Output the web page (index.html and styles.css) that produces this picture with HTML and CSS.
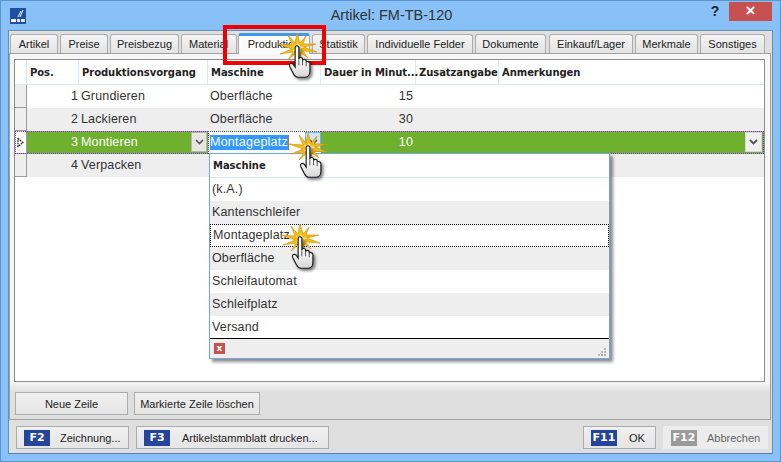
FILE: index.html
```html
<!DOCTYPE html>
<html lang="de">
<head>
<meta charset="utf-8">
<title>Artikel: FM-TB-120</title>
<link rel="stylesheet" href="styles.css">
</head>
<body>
<svg class="defs" width="0" height="0" aria-hidden="true">
  <defs>
    <filter id="soft" x="-30%" y="-30%" width="170%" height="170%">
      <feDropShadow dx="2" dy="2" stdDeviation="1.500" flood-color="#000" flood-opacity=".55"/>
    </filter>
    <linearGradient id="handfill" x1="0" y1="0" x2="0" y2="1">
      <stop offset=".4" stop-color="#fff"/>
      <stop offset="1" stop-color="#d5d5d5"/>
    </linearGradient>
  </defs>
  <symbol id="pointer" viewBox="0 0 50 50">
    <polygon points="22,1 25,11 31,4 28,12 41,12 29,15 42,20 28,19 33,26 26,21 24,31 21,21 13,28 18,20 5,22 17,17 3,12 17,13 13,3 20,11" fill="#f2bd18" stroke="#cf9000" stroke-width=".6"/>
    <polygon points="23,11 25,14 29,15 26,17 25,21 22,19 18,19 20,16 18,13 21,14" fill="#ffefa6"/>
    <g transform="translate(22 14) scale(.92) translate(-22 -14)">
      <path filter="url(#soft)" d="M20 16c0-3 4-3 4 0v12c0-2 4-2 4 0v2c0-2 4-2 4 0v2c0-2 4-1 4 1v9c0 4-3 6-6 6h-7c-3 0-4-2-5-4l-4-8c-1-3 2-4 4-2l2 3z" fill="url(#handfill)" stroke="#1b1b1b" stroke-width="1.200"/>
      <path d="M24 28v7M28 30v5M32 32v4" stroke="#333" stroke-width=".9" fill="none"/>
    </g>
  </symbol>
</svg>

<div class="window">
  <header class="titlebar">
    <svg class="logo" viewBox="0 0 16 16" aria-hidden="true">
      <rect width="16" height="16" fill="#1f4fa3"/>
      <path d="M8 9l3-6M10 9l3-7" stroke="#fff" stroke-width="1" fill="none"/>
      <rect x="1" y="11" width="5" height="3" fill="#fff"/>
      <rect x="7" y="11" width="3" height="3" fill="#dfe8f5"/>
      <rect x="11" y="11" width="4" height="3" fill="#dfe8f5"/>
    </svg>
    <div class="title">Artikel: FM-TB-120</div>
    <div class="help">?</div>
    <div class="close">×</div>
  </header>

  <main class="client">
    <nav class="tabs">
      <div class="tab w-artikel">Artikel</div>
      <div class="tab w-preise">Preise</div>
      <div class="tab w-bezug">Preisbezug</div>
      <div class="tab w-material">Material</div>
      <div class="tab active">Produktion</div>
      <div class="tab w-statistik">Statistik</div>
      <div class="tab w-felder">Individuelle Felder</div>
      <div class="tab w-dok">Dokumente</div>
      <div class="tab w-einkauf">Einkauf/Lager</div>
      <div class="tab w-merk">Merkmale</div>
      <div class="tab w-sonst">Sonstiges</div>
    </nav>

    <section class="pane">
      <div class="grid">
        <div class="row head">
          <div class="hdr c0"></div>
          <div class="hdr c1">Pos.</div>
          <div class="hdr c2">Produktionsvorgang</div>
          <div class="hdr c3">Maschine</div>
          <div class="hdr c4">Dauer in Minut...</div>
          <div class="hdr c5">Zusatzangabe</div>
          <div class="hdr c6">Anmerkungen</div>
        </div>
        <div class="row">
          <div class="sel c0"></div><div class="cell c1 num">1</div><div class="cell c2">Grundieren</div><div class="cell c3">Oberfläche</div><div class="cell c4 num">15</div><div class="cell c5"></div><div class="cell c6"></div>
        </div>
        <div class="row alt">
          <div class="sel c0"></div><div class="cell c1 num">2</div><div class="cell c2">Lackieren</div><div class="cell c3">Oberfläche</div><div class="cell c4 num">30</div><div class="cell c5"></div><div class="cell c6"></div>
        </div>
        <div class="row current">
          <div class="sel c0 marker"><svg width="7" height="9" viewBox="0 0 7 9" aria-hidden="true"><path d="M1 .5L6 4.500L1 8.500Z" fill="#fff" stroke="#000" stroke-width="1.200" stroke-dasharray="1.500 1"/></svg></div>
          <div class="cell c1 num">3</div>
          <div class="cell c2 combo">Montieren<span class="drop"><svg width="9" height="6" viewBox="0 0 9 6" aria-hidden="true"><path d="M1 1l3.500 3.500L8 1" fill="none" stroke="#555" stroke-width="1.600"/></svg></span></div>
          <div class="cell c3 editor"><span class="selected">Montageplatz</span><span class="drop blue"><svg width="9" height="6" viewBox="0 0 9 6" aria-hidden="true"><path d="M1 1l3.500 3.500L8 1" fill="none" stroke="#555" stroke-width="1.600"/></svg></span></div>
          <div class="cell c4 num">10</div>
          <div class="cell c5"></div>
          <div class="cell c6 combo"><span class="drop end"><svg width="9" height="6" viewBox="0 0 9 6" aria-hidden="true"><path d="M1 1l3.500 3.500L8 1" fill="none" stroke="#555" stroke-width="1.800"/></svg></span></div>
        </div>
        <div class="row alt">
          <div class="sel c0"></div><div class="cell c1 num">4</div><div class="cell c2">Verpacken</div><div class="cell c3"></div><div class="cell c4"></div><div class="cell c5"></div><div class="cell c6"></div>
        </div>
      </div>
      <div class="pane-actions">
        <button class="btn new-row">Neue Zeile</button>
        <button class="btn del-row">Markierte Zeile löschen</button>
      </div>
    </section>

    <footer class="actions">
      <button class="btn act draw"><span class="key">F2</span><span class="lbl">Zeichnung...</span></button>
      <button class="btn act print"><span class="key">F3</span><span class="lbl">Artikelstammblatt drucken...</span></button>
      <div class="spacer"></div>
      <button class="btn act ok"><span class="key">F11</span><span class="lbl">OK</span></button>
      <button class="btn act cancel"><span class="key">F12</span><span class="lbl">Abbrechen</span></button>
    </footer>
  </main>

  <div class="popup">
    <div class="pop-head">Maschine</div>
    <div class="pop-item">(k.A.)</div>
    <div class="pop-item alt">Kantenschleifer</div>
    <div class="pop-item focus">Montageplatz</div>
    <div class="pop-item alt">Oberfläche</div>
    <div class="pop-item">Schleifautomat</div>
    <div class="pop-item alt">Schleifplatz</div>
    <div class="pop-item">Versand</div>
    <div class="pop-foot">
      <span class="pop-x">x</span>
      <svg class="grip" width="9" height="9" viewBox="0 0 9 9" aria-hidden="true"><path d="M7 0h2v2H7zM4 3h2v2H4zM7 3h2v2H7zM1 6h2v2H1zM4 6h2v2H4zM7 6h2v2H7z" fill="#b5b5b5"/></svg>
    </div>
  </div>

  <div class="redbox"></div>
  <svg class="cursor cur-a" aria-hidden="true"><use href="#pointer"/></svg>
  <svg class="cursor cur-b" aria-hidden="true"><use href="#pointer"/></svg>
  <svg class="cursor cur-c" aria-hidden="true"><use href="#pointer"/></svg>
</div>
</body>
</html>
```

FILE: styles.css
```css
* { box-sizing: border-box; }
html, body { margin: 0; padding: 0; }
body { width: 781px; height: 462px; overflow: hidden; font-family: "Liberation Sans", Arial, sans-serif; font-size: 12px; color: #222; }
.defs { position: absolute; }

.window { position: relative; width: 781px; height: 462px; background: #87c1f8; border: 1px solid #5f94c8; display: flex; flex-direction: column; }

.titlebar { height: 29px; display: flex; align-items: flex-start; flex: none; }
.logo { width: 16px; height: 16px; margin: 7px 0 0 9px; flex: none; }
.title { flex: 1; text-align: center; font-size: 14.500px; line-height: 18px; margin-top: 5px; padding-left: 50px; color: #333; }
.help { width: 16px; font: bold 14px/16px "Liberation Sans", Arial, sans-serif; color: #222; margin: 2px 6px 0 0; text-align: center; }
.close { width: 43px; height: 19px; margin: 1px 8px 0 0; background: #c75050; color: #fff; font: bold 17px/18px "Liberation Sans", Arial, sans-serif; text-align: center; }

.client { flex: 1; margin: 0 7px 7px; background: #dfdfdf; border: 1px solid #6a8fb3; border-bottom-color: #4e84b8; display: flex; flex-direction: column; min-height: 0; }

.tabs { height: 23px; display: flex; align-items: flex-end; padding-left: 1px; flex: none; margin-top: -1px; }
.tab { height: 19px; margin-right: 2px; padding-top: 2px; border: 1px solid #acacac; border-bottom: 0; border-radius: 3px 3px 0 0; background: linear-gradient(#f5f5f5, #e3e3e3); text-align: center; font-size: 11px; line-height: 14px; color: #222; white-space: nowrap; }
.w-artikel { width: 48px; }
.w-preise { width: 48px; }
.w-bezug { width: 69px; }
.w-material { width: 56px; margin-right: 1px; overflow: hidden; text-align: left; padding-left: 7px; }
.tab.active { width: 72px; height: 21px; padding-top: 1px; background: #fbfbfb; border-top: 3px solid #3f9bea; border-color: #3f9bea #acacac #acacac; position: relative; z-index: 1; margin-bottom: -1px; }
.w-statistik { width: 53px; }
.w-felder { width: 106px; }
.w-dok { width: 71px; margin-right: 3px; }
.w-einkauf { width: 84px; }
.w-merk { width: 63px; }
.w-sonst { width: 65px; margin-right: 0; }

.pane { flex: 1; margin: 0 1px 0 0; background: #f6f6f6; border: 1px solid #a0a0a0; padding: 5px 5px 0 4px; display: flex; flex-direction: column; min-height: 0; }
.grid { height: 323px; flex: none; background: #fff; border: 1px solid #8c8c8c; display: flex; flex-direction: column; overflow: hidden; }

.row { display: flex; height: 23px; flex: none; }
.head { height: 25px; background: #fff; border-bottom: 1px solid #dbe8f7; }
.row.alt { background: #eeeeee; }
.row.current { height: 23px; background: #6fb02e; color: #fff; box-shadow: inset 0 0 0 1px #a59ab0; outline: 1px dotted #7a3fb0; outline-offset: -1px; }

.c0 { width: 12px; flex: none; }
.c1 { width: 52px; flex: none; }
.c2 { width: 129px; flex: none; }
.c3 { width: 113px; flex: none; }
.c4 { width: 95px; flex: none; }
.c5 { width: 83px; flex: none; }
.c6 { flex: 1; }

.hdr { font: bold 10px/26px "DejaVu Sans", Verdana, sans-serif; letter-spacing: -.05px; color: #222; padding-left: 3px; border-right: 1px solid #dbe8f7; white-space: nowrap; }
.hdr.c6 { border-right: 0; padding-left: 3px; }
.cell { line-height: 22px; padding-left: 2px; white-space: nowrap; font-size: 12.500px; letter-spacing: .15px; position: relative; color: #333; }
.current .cell { color: #fff; line-height: 23px; }
.num { text-align: right; padding-right: 3px; }
.c1.num { padding-right: 1px; }
.sel { background: #eeeeee; border-right: 1px solid #9c9c9c; border-bottom: 1px solid #9c9c9c; }
.marker { display: flex; align-items: center; justify-content: center; background: #fff; }

.drop { position: absolute; right: 1px; top: 1px; width: 16px; height: 20px; background: #e6e6e6; border: 1px solid #b5b5b5; display: flex; align-items: center; justify-content: center; }
.drop.blue { background: #cfe2f8; border-color: #79aee4; right: 0; }
.drop.end { right: 2px; width: 17px; background: #efefef; border-color: #d8d8d8; }
.editor { background: #fff; outline: 1px dotted #444; outline-offset: -1px; }
.selected { background: #3399ff; color: #fff; border-right: 1px solid #c76a1a; padding-bottom: 1px; letter-spacing: .25px; }

.pane-actions { flex: 1; display: flex; gap: 6px; padding: 10px 0 0 5px; margin: 0 -5px 0 -4px; background: linear-gradient(#f6f6f6, #dfdfdf 10px); align-items: flex-start; }
.btn { height: 23px; padding: 0; background: linear-gradient(#f0f0f0, #e5e5e5); border: 1px solid #acacac; font: 11px "Liberation Sans", Arial, sans-serif; color: #222; }
.new-row { width: 113px; }
.del-row { width: 126px; }

.actions { height: 33px; flex: none; display: flex; gap: 7px; padding: 6px 4px 0 7px; background: #dfdfdf; }
.act { display: flex; align-items: center; height: 23px; padding-left: 7px; }
.key { width: 26px; height: 16px; background: #24459b; color: #fff; font: bold 11px/16px "DejaVu Sans", Verdana, sans-serif; text-align: center; flex: none; }
.lbl { white-space: nowrap; }
.draw { width: 113px; }
.draw .lbl { margin-left: 10px; }
.print { width: 193px; }
.print .lbl { margin-left: 12px; }
.spacer { flex: 1; }
.ok { width: 73px; }
.ok .lbl { margin-left: 12px; }
.cancel { width: 105px; border-color: #ececec; background: #ececec; }
.cancel .key { background: #9a9a9a; }
.cancel .lbl { margin-left: 10px; color: #666; }

.popup { position: absolute; left: 208px; top: 152px; width: 401px; height: 206px; background: #fff; border: 1px solid #6ea8e0; box-shadow: 3px 3px 3px rgba(0,0,0,.45); display: flex; flex-direction: column; z-index: 3; }
.pop-head { height: 24px; flex: none; font: bold 10px/24px "DejaVu Sans", Verdana, sans-serif; letter-spacing: -.05px; padding-left: 3px; color: #222; border-bottom: 1px solid #dbe8f7; }
.pop-item { height: 23px; flex: none; line-height: 22px; padding-left: 2px; font-size: 12.500px; letter-spacing: .15px; color: #333; }
.pop-item.alt { background: #eeeeee; }
.pop-item.focus { outline: 1px dotted #000; outline-offset: -1px; padding-left: 3px; }
.pop-foot { flex: 1; border-top: 1px solid #000; background: #eeeeee; display: flex; align-items: center; justify-content: space-between; padding: 0 3px 0 4px; margin-top: -1px; }
.pop-x { width: 11px; height: 11px; background: #c75050; color: #fff; font: bold 9px/10px "DejaVu Sans", sans-serif; text-align: center; }
.grip { align-self: flex-end; margin-bottom: 1px; }

.redbox { position: absolute; left: 222px; top: 24px; width: 103px; height: 40px; border: 4px solid #f00000; z-index: 4; }
.cursor { position: absolute; width: 50px; height: 50px; z-index: 5; overflow: visible; }
.cur-a { left: 274px; top: 31px; }
.cur-b { left: 285px; top: 131px; }
.cur-c { left: 277px; top: 222px; }
```
